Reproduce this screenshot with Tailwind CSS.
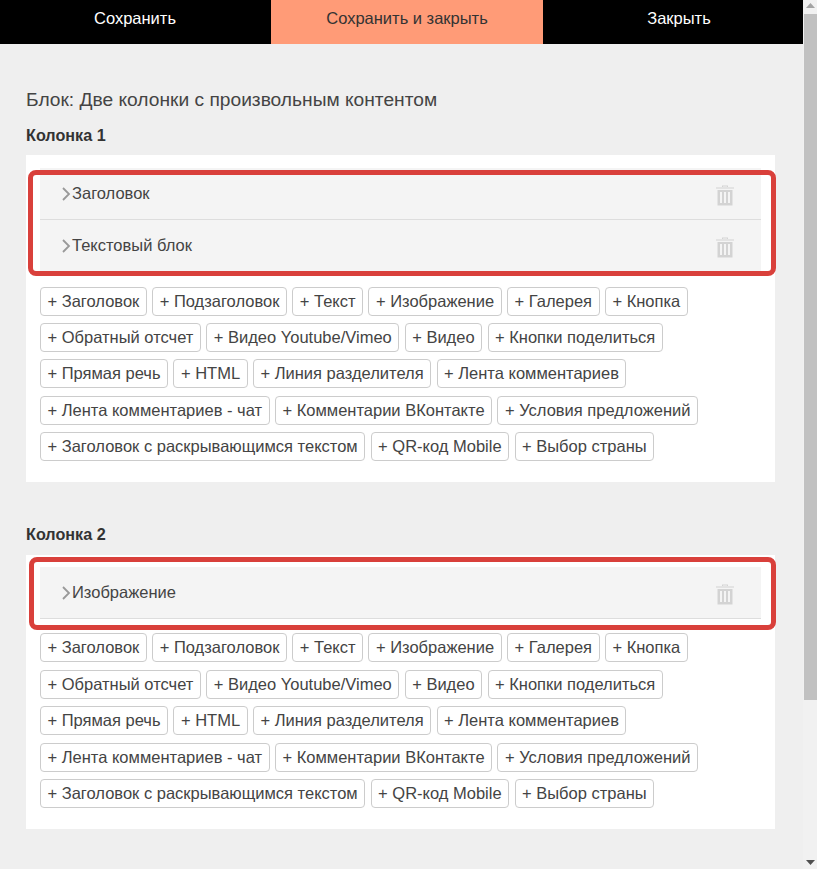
<!DOCTYPE html>
<html lang="ru">
<head>
<meta charset="utf-8">
<script src="https://cdn.jsdelivr.net/npm/@tailwindcss/browser@4"></script>
<title>Блок</title>
</head>
<body class="h-[869px] overflow-hidden bg-[#efefef] font-['Liberation_Sans',Arial,sans-serif] text-[16.5px] text-[#333]">
<div class="flex h-[869px]">
  <main class="w-[803px] shrink-0">
    <nav class="flex h-11 overflow-hidden bg-black text-white leading-[37px]">
      <div class="w-[270px] shrink-0 text-center">Сохранить</div>
      <div class="ml-[1px] w-[272px] shrink-0 bg-[#ff9b77] text-center text-[#333]">Сохранить и закрыть</div>
      <div class="w-[272px] shrink-0 text-center">Закрыть</div>
    </nav>
    <div class="px-[26px] pt-[45px]">
      <h1 class="h-[22px] text-[19.2px] leading-[22px] font-normal text-[#444]">Блок: Две колонки с произвольным контентом</h1>
      <h2 class="mt-[15px] h-[19px] text-[16.2px] leading-[19px] font-bold">Колонка 1</h2>
      <section class="relative mt-[10px] h-[327px] w-[749px] bg-white px-[14px] pt-[13px]">
        <div class="absolute top-[15px] left-[2px] z-10 h-[106px] w-[748px] rounded-[8px] border-[5px] border-[#d9403b]"></div>
        <div class="w-[721px] bg-[#f4f4f4]">
          <div class="flex h-[52px] items-center justify-between border-b border-[#ddd] pl-[21px] pr-[27px]">
            <div class="flex items-center gap-[1px]">
              <svg class="h-[14px] w-[10px]" viewBox="0 0 10 14" fill="none" stroke="#999" stroke-width="1.8"><path d="M2 1l6 6-6 6"/></svg>
              <span class="text-[#444]">Заголовок</span>
            </div>
            <svg class="h-[22px] w-[18px] translate-y-[1px]" viewBox="0 0 18 22" fill="#d3d3d3"><path d="M6 3V1.500h6V3h-1V2.400H7V3z"/><path d="M0 3.500h18v1H0z"/><path fill-rule="evenodd" d="M1.500 6h15v15.500h-15zM4 8v11h2V8zm4 0v11h2V8zm4 0v11h2V8z"/></svg>
          </div>
          <div class="flex h-[51px] items-center justify-between pl-[21px] pr-[27px]">
            <div class="flex items-center gap-[1px]">
              <svg class="h-[14px] w-[10px]" viewBox="0 0 10 14" fill="none" stroke="#999" stroke-width="1.8"><path d="M2 1l6 6-6 6"/></svg>
              <span class="text-[#444]">Текстовый блок</span>
            </div>
            <svg class="h-[22px] w-[18px] translate-y-[1px]" viewBox="0 0 18 22" fill="#d3d3d3"><path d="M6 3V1.500h6V3h-1V2.400H7V3z"/><path d="M0 3.500h18v1H0z"/><path fill-rule="evenodd" d="M1.500 6h15v15.500h-15zM4 8v11h2V8zm4 0v11h2V8zm4 0v11h2V8z"/></svg>
          </div>
        </div>
        <div class="mt-[15.75px] flex flex-wrap gap-x-[5.4px] gap-y-[7.25px] leading-[27px] text-[#444]">
          <span class="rounded-[4px] border border-[#ccc] px-[6.5px]">+ Заголовок</span>
          <span class="rounded-[4px] border border-[#ccc] px-[6.5px]">+ Подзаголовок</span>
          <span class="rounded-[4px] border border-[#ccc] px-[6.5px]">+ Текст</span>
          <span class="rounded-[4px] border border-[#ccc] px-[6.5px]">+ Изображение</span>
          <span class="rounded-[4px] border border-[#ccc] px-[6.5px]">+ Галерея</span>
          <span class="rounded-[4px] border border-[#ccc] px-[6.5px]">+ Кнопка</span>
          <span class="rounded-[4px] border border-[#ccc] px-[6.5px]">+ Обратный отсчет</span>
          <span class="rounded-[4px] border border-[#ccc] px-[6.5px]">+ Видео Youtube/Vimeo</span>
          <span class="rounded-[4px] border border-[#ccc] px-[6.5px]">+ Видео</span>
          <span class="rounded-[4px] border border-[#ccc] px-[6.5px]">+ Кнопки поделиться</span>
          <span class="rounded-[4px] border border-[#ccc] px-[6.5px]">+ Прямая речь</span>
          <span class="rounded-[4px] border border-[#ccc] px-[6.5px]">+ HTML</span>
          <span class="rounded-[4px] border border-[#ccc] px-[6.5px]">+ Линия разделителя</span>
          <span class="rounded-[4px] border border-[#ccc] px-[6.5px]">+ Лента комментариев</span>
          <span class="rounded-[4px] border border-[#ccc] px-[6.5px]">+ Лента комментариев - чат</span>
          <span class="rounded-[4px] border border-[#ccc] px-[6.5px]">+ Комментарии ВКонтакте</span>
          <span class="rounded-[4px] border border-[#ccc] px-[6.5px]">+ Условия предложений</span>
          <span class="rounded-[4px] border border-[#ccc] px-[6.5px]">+ Заголовок с раскрывающимся текстом</span>
          <span class="rounded-[4px] border border-[#ccc] px-[6.5px]">+ QR-код Mobile</span>
          <span class="rounded-[4px] border border-[#ccc] px-[6.5px]">+ Выбор страны</span>
        </div>
      </section>
      <h2 class="mt-[43px] h-[19px] text-[16.2px] leading-[19px] font-bold">Колонка 2</h2>
      <section class="relative mt-[11px] h-[274px] w-[749px] bg-white px-[14px] pt-[12px]">
        <div class="absolute top-[2px] left-[3px] z-10 h-[73px] w-[747px] rounded-[8px] border-[5px] border-[#d9403b]"></div>
        <div class="w-[721px] bg-[#f4f4f4]">
          <div class="flex h-[52px] items-center justify-between border-b border-[#ddd] pl-[21px] pr-[27px]">
            <div class="flex items-center gap-[1px]">
              <svg class="h-[14px] w-[10px]" viewBox="0 0 10 14" fill="none" stroke="#999" stroke-width="1.8"><path d="M2 1l6 6-6 6"/></svg>
              <span class="text-[#444]">Изображение</span>
            </div>
            <svg class="h-[22px] w-[18px] translate-y-[1px]" viewBox="0 0 18 22" fill="#d3d3d3"><path d="M6 3V1.500h6V3h-1V2.400H7V3z"/><path d="M0 3.500h18v1H0z"/><path fill-rule="evenodd" d="M1.500 6h15v15.500h-15zM4 8v11h2V8zm4 0v11h2V8zm4 0v11h2V8z"/></svg>
          </div>
        </div>
        <div class="mt-[14px] flex flex-wrap gap-x-[5.4px] gap-y-[7.5px] leading-[27px] text-[#444]">
          <span class="rounded-[4px] border border-[#ccc] px-[6.5px]">+ Заголовок</span>
          <span class="rounded-[4px] border border-[#ccc] px-[6.5px]">+ Подзаголовок</span>
          <span class="rounded-[4px] border border-[#ccc] px-[6.5px]">+ Текст</span>
          <span class="rounded-[4px] border border-[#ccc] px-[6.5px]">+ Изображение</span>
          <span class="rounded-[4px] border border-[#ccc] px-[6.5px]">+ Галерея</span>
          <span class="rounded-[4px] border border-[#ccc] px-[6.5px]">+ Кнопка</span>
          <span class="rounded-[4px] border border-[#ccc] px-[6.5px]">+ Обратный отсчет</span>
          <span class="rounded-[4px] border border-[#ccc] px-[6.5px]">+ Видео Youtube/Vimeo</span>
          <span class="rounded-[4px] border border-[#ccc] px-[6.5px]">+ Видео</span>
          <span class="rounded-[4px] border border-[#ccc] px-[6.5px]">+ Кнопки поделиться</span>
          <span class="rounded-[4px] border border-[#ccc] px-[6.5px]">+ Прямая речь</span>
          <span class="rounded-[4px] border border-[#ccc] px-[6.5px]">+ HTML</span>
          <span class="rounded-[4px] border border-[#ccc] px-[6.5px]">+ Линия разделителя</span>
          <span class="rounded-[4px] border border-[#ccc] px-[6.5px]">+ Лента комментариев</span>
          <span class="rounded-[4px] border border-[#ccc] px-[6.5px]">+ Лента комментариев - чат</span>
          <span class="rounded-[4px] border border-[#ccc] px-[6.5px]">+ Комментарии ВКонтакте</span>
          <span class="rounded-[4px] border border-[#ccc] px-[6.5px]">+ Условия предложений</span>
          <span class="rounded-[4px] border border-[#ccc] px-[6.5px]">+ Заголовок с раскрывающимся текстом</span>
          <span class="rounded-[4px] border border-[#ccc] px-[6.5px]">+ QR-код Mobile</span>
          <span class="rounded-[4px] border border-[#ccc] px-[6.5px]">+ Выбор страны</span>
        </div>
      </section>
    </div>
  </main>
  <aside class="flex w-[14px] flex-col bg-[#f1f1f1] pl-[1px]">
    <svg class="h-[14px] w-[13px] shrink-0" viewBox="0 0 13 14" fill="#a3a3a3"><path d="M6.500 3L11 8H2z"/></svg>
    <div class="h-[686px] bg-[#c1c1c1]"></div>
    <div class="flex-1"></div>
    <svg class="h-[14px] w-[13px] shrink-0" viewBox="0 0 13 14" fill="#505050"><path d="M2 5h9l-4.500 5z"/></svg>
  </aside>
</div>
</body>
</html>
